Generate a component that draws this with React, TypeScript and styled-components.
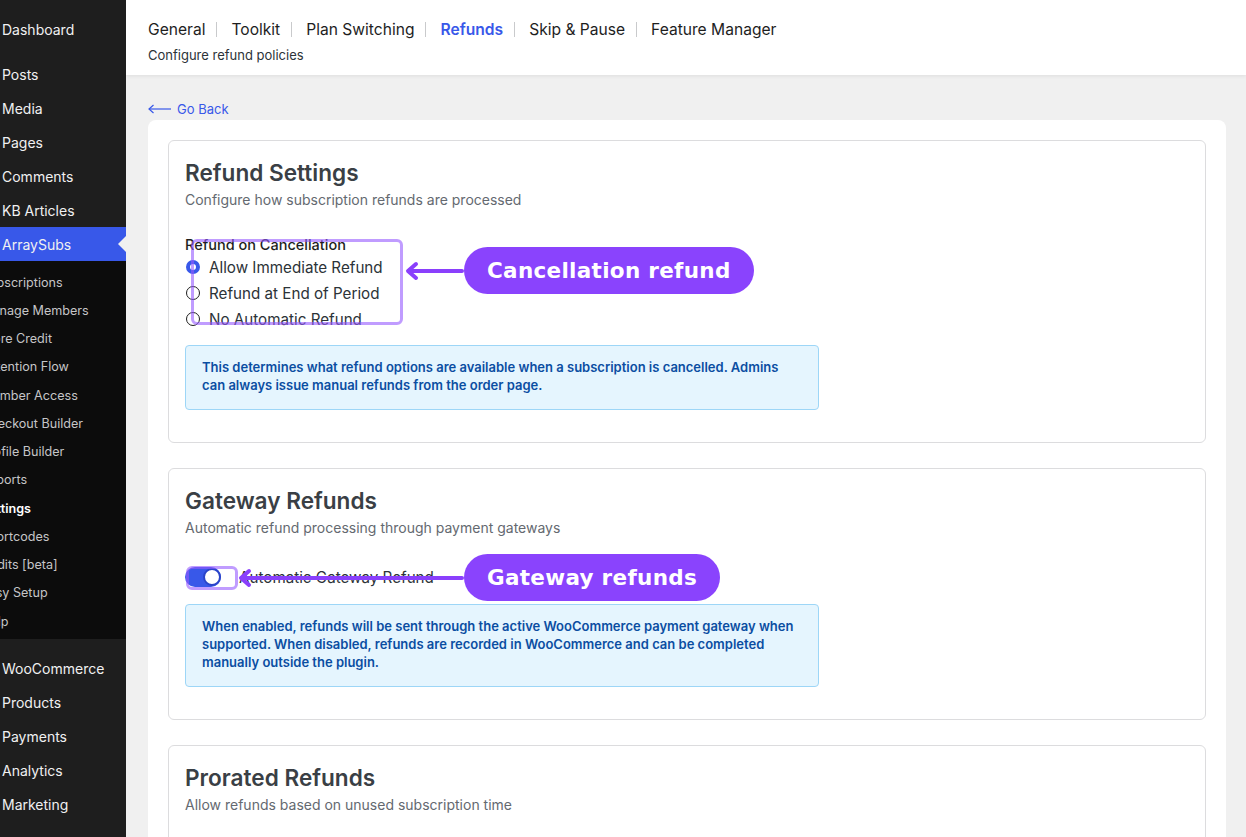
import React from "react";
import styled, { createGlobalStyle, css } from "styled-components";

const GlobalStyle = createGlobalStyle`
  html, body { margin: 0; padding: 0; }
  body {
    font-family: Inter, "Noto Sans", sans-serif;
    background: #f0f0f0;
    overflow: hidden;
  }
  * { box-sizing: border-box; }
`;

const Layout = styled.div`
  display: grid;
  grid-template-columns: 126px 1fr;
  height: 100vh;
  overflow: hidden;
`;

/* ---------- admin sidebar ---------- */

const Sidebar = styled.nav`
  background: #1e1e1e;
  color: #f0f0f1;
  overflow: hidden;
  padding-top: 12px;
  display: flex;
  flex-direction: column;
`;

const MenuItem = styled.div<{ $current?: boolean; $gap?: number }>`
  position: relative;
  height: 34px;
  flex-shrink: 0;
  display: flex;
  align-items: center;
  padding-left: 2px;
  margin-top: ${({ $gap }) => $gap ?? 0}px;
  font-size: 14px;
  white-space: nowrap;
  background: ${({ $current }) => ($current ? "#3858e9" : "transparent")};
  ${({ $current }) =>
    $current &&
    css`
      &::after {
        content: "";
        position: absolute;
        right: 0;
        top: 50%;
        margin-top: -8px;
        border: 8px solid transparent;
        border-right-color: #f0f0f0;
      }
    `}
`;

const SubMenu = styled.div`
  background: #0c0c0c;
  padding: 7px 0 4px;
  flex-shrink: 0;
`;

const SubItem = styled.div<{ $active?: boolean }>`
  height: 28.25px;
  display: flex;
  align-items: center;
  font-size: 12.6px;
  white-space: nowrap;
  color: ${({ $active }) => ($active ? "#fff" : "#c5c5c7")};
  font-weight: ${({ $active }) => ($active ? 600 : 400)};
  span {
    margin-left: -19px;
  }
`;

/* ---------- page ---------- */

const Main = styled.main`
  display: flex;
  flex-direction: column;
  min-width: 0;
  overflow: hidden;
`;

const Header = styled.header`
  background: #fff;
  height: 75px;
  padding: 18px 22px 0;
  box-shadow: 0 1px 4px rgba(0, 0, 0, 0.08);
  position: relative;
  z-index: 1;
  flex-shrink: 0;
`;

const Tabs = styled.div`
  display: flex;
  align-items: center;
  height: 22px;
  font-size: 15.6px;
`;

const Tab = styled.span<{ $active?: boolean }>`
  color: ${({ $active }) => ($active ? "#3858e9" : "#1e1e1e")};
  font-weight: ${({ $active }) => ($active ? 600 : 400)};
`;

const TabSep = styled.span`
  width: 1px;
  height: 15px;
  background: #c9cacc;
  margin: 0 14px 0 11px;
`;

const HeaderSub = styled.div`
  margin-top: 6px;
  font-size: 13px;
  line-height: 18px;
  color: #2c3338;
`;

const Content = styled.div`
  padding: 25px 20px 0 22px;
  display: flex;
  flex-direction: column;
  flex: 1;
  min-height: 0;
`;

const BackLink = styled.a`
  display: flex;
  align-items: center;
  gap: 6px;
  height: 18px;
  flex-shrink: 0;
  font-size: 13px;
  color: #3858e9;
  text-decoration: none;
  margin-bottom: 2px;
`;

const Panel = styled.div`
  flex: 1;
  background: #fff;
  border-radius: 8px 8px 0 0;
  padding: 20px;
  display: flex;
  flex-direction: column;
  gap: 25px;
`;

const Card = styled.section<{ $tall?: boolean }>`
  position: relative;
  flex-shrink: 0;
  border: 1px solid #dcdcde;
  border-radius: 6px;
  padding: 16px 16px 32px;
  min-height: ${({ $tall }) => ($tall ? "160px" : "auto")};
`;

const CardTitle = styled.h2`
  margin: 0;
  font-size: 22.6px;
  line-height: 32px;
  font-weight: 600;
  color: #3a3f45;
`;

const CardSub = styled.p`
  margin: 1px 0 0;
  font-size: 14px;
  line-height: 20px;
  color: #646970;
`;

const FieldLabel = styled.div`
  margin-top: 25px;
  font-size: 14.5px;
  line-height: 20px;
  font-weight: 500;
  color: #1e1e1e;
`;

const RadioGroup = styled.div`
  display: flex;
  flex-direction: column;
  margin-top: -1px;
`;

const RadioRow = styled.label`
  height: 26px;
  display: flex;
  align-items: center;
  gap: 9px;
  font-size: 15.2px;
  color: #2c3338;
`;

const RadioDot = styled.span<{ $checked?: boolean }>`
  width: 14px;
  height: 14px;
  margin-left: 1px;
  border-radius: 50%;
  background: #fff;
  border: ${({ $checked }) => ($checked ? "4px solid #3858e9" : "1px solid #1e1e1e")};
`;

const ToggleRow = styled.div`
  margin-top: 27px;
  height: 24px;
  display: flex;
  align-items: center;
  gap: 18px;
  font-size: 15.2px;
  color: #2c3338;
`;

const Track = styled.span<{ $on?: boolean }>`
  width: 36px;
  height: 20px;
  border-radius: 10px;
  padding: 2px;
  display: flex;
  justify-content: ${({ $on }) => ($on ? "flex-end" : "flex-start")};
  background: ${({ $on }) => ($on ? "#3858e9" : "#949494")};
`;

const Knob = styled.span`
  width: 18px;
  height: 18px;
  margin: -1px -2px 0 0;
  border-radius: 50%;
  background: #fff;
  border: 2px solid #2a44c9;
`;

const InfoBox = styled.div<{ $gap: number }>`
  margin-top: ${({ $gap }) => $gap}px;
  width: 634px;
  background: #e5f5fe;
  border: 1px solid #9dd6f7;
  border-radius: 4px;
  padding: 12px 16px 15px;
  font-size: 13px;
  line-height: 18px;
  font-weight: 600;
  color: #0b4ea2;
`;

/* ---------- annotation overlay ---------- */

const Highlight = styled.div<{ $l: number; $t: number; $w: number; $h: number }>`
  position: absolute;
  left: ${({ $l }) => $l}px;
  top: ${({ $t }) => $t}px;
  width: ${({ $w }) => $w}px;
  height: ${({ $h }) => $h}px;
  border: 3px solid rgba(150, 90, 255, 0.6);
  border-radius: 6px;
  pointer-events: none;
`;

const Pill = styled.div<{ $l: number; $t: number }>`
  position: absolute;
  left: ${({ $l }) => $l}px;
  top: ${({ $t }) => $t}px;
  height: 47px;
  padding: 0 23px;
  border-radius: 24px;
  background: #8a43fd;
  color: #fff;
  display: flex;
  align-items: center;
  font-family: "DejaVu Sans", sans-serif;
  font-weight: 700;
  font-size: 21.5px;
  letter-spacing: 0.3px;
  white-space: nowrap;
`;

const ArrowSvg = styled.svg<{ $l: number; $t: number }>`
  position: absolute;
  left: ${({ $l }) => $l}px;
  top: ${({ $t }) => $t}px;
  overflow: visible;
`;

function Arrow({ l, t, w }: { l: number; t: number; w: number }) {
  return (
    <ArrowSvg $l={l} $t={t} width={w} height={20} viewBox={`0 0 ${w} 20`}>
      <line x1={5} y1={10} x2={w - 2} y2={10} stroke="#8a3ffc" strokeWidth={4} strokeLinecap="round" />
      <polyline points="12,3 4,10 12,17" fill="none" stroke="#8a3ffc" strokeWidth={4} strokeLinecap="round" strokeLinejoin="round" />
    </ArrowSvg>
  );
}

const topMenu = ["Posts", "Media", "Pages", "Comments", "KB Articles"];
const subMenu = [
  "Subscriptions",
  "Manage Members",
  "Store Credit",
  "Retention Flow",
  "Member Access",
  "Checkout Builder",
  "Profile Builder",
  "Reports",
  "Settings",
  "Shortcodes",
  "Audits [beta]",
  "Easy Setup",
  "Help",
];
const bottomMenu = ["WooCommerce", "Products", "Payments", "Analytics", "Marketing"];
const tabs = ["General", "Toolkit", "Plan Switching", "Refunds", "Skip & Pause", "Feature Manager"];
const radios = ["Allow Immediate Refund", "Refund at End of Period", "No Automatic Refund"];

export default function App() {
  return (
    <>
      <GlobalStyle />
      <Layout>
        <Sidebar>
          <MenuItem>Dashboard</MenuItem>
          {topMenu.map((m, i) => (
            <MenuItem key={m} $gap={i === 0 ? 11 : 0}>
              {m}
            </MenuItem>
          ))}
          <MenuItem $current>ArraySubs</MenuItem>
          <SubMenu>
            {subMenu.map((s) => (
              <SubItem key={s} $active={s === "Settings"}>
                <span>{s}</span>
              </SubItem>
            ))}
          </SubMenu>
          {bottomMenu.map((m, i) => (
            <MenuItem key={m} $gap={i === 0 ? 12 : 0}>
              {m}
            </MenuItem>
          ))}
        </Sidebar>

        <Main>
          <Header>
            <Tabs>
              {tabs.map((t, i) => (
                <React.Fragment key={t}>
                  {i > 0 && <TabSep />}
                  <Tab $active={t === "Refunds"}>{t}</Tab>
                </React.Fragment>
              ))}
            </Tabs>
            <HeaderSub>Configure refund policies</HeaderSub>
          </Header>

          <Content>
            <BackLink href="#">
              <svg width="23" height="10" viewBox="0 0 23 10">
                <line x1="1" y1="5" x2="23" y2="5" stroke="#3858e9" strokeWidth="1.2" />
                <polyline points="5.5,1 1,5 5.5,9" fill="none" stroke="#3858e9" strokeWidth="1.2" />
              </svg>
              Go Back
            </BackLink>

            <Panel>
              <Card>
                <CardTitle>Refund Settings</CardTitle>
                <CardSub>Configure how subscription refunds are processed</CardSub>
                <FieldLabel>Refund on Cancellation</FieldLabel>
                <RadioGroup>
                  {radios.map((r, i) => (
                    <RadioRow key={r}>
                      <RadioDot $checked={i === 0} />
                      {r}
                    </RadioRow>
                  ))}
                </RadioGroup>
                <InfoBox $gap={13}>
                  This determines what refund options are available when a subscription is cancelled. Admins
                  <br />
                  can always issue manual refunds from the order page.
                </InfoBox>

                <Highlight $l={22} $t={98} $w={212} $h={86} />
                <Arrow l={235} t={120} w={60} />
                <Pill $l={295} $t={106}>Cancellation refund</Pill>
              </Card>

              <Card>
                <CardTitle>Gateway Refunds</CardTitle>
                <CardSub>Automatic refund processing through payment gateways</CardSub>
                <ToggleRow>
                  <Track $on>
                    <Knob />
                  </Track>
                  Automatic Gateway Refund
                </ToggleRow>
                <InfoBox $gap={15}>
                  When enabled, refunds will be sent through the active WooCommerce payment gateway when
                  <br />
                  supported. When disabled, refunds are recorded in WooCommerce and can be completed
                  <br />
                  manually outside the plugin.
                </InfoBox>

                <Highlight $l={17} $t={97} $w={52} $h={24} />
                <Arrow l={68} t={99} w={227} />
                <Pill $l={295} $t={85}>Gateway refunds</Pill>
              </Card>

              <Card $tall>
                <CardTitle>Prorated Refunds</CardTitle>
                <CardSub>Allow refunds based on unused subscription time</CardSub>
              </Card>
            </Panel>
          </Content>
        </Main>
      </Layout>
    </>
  );
}
